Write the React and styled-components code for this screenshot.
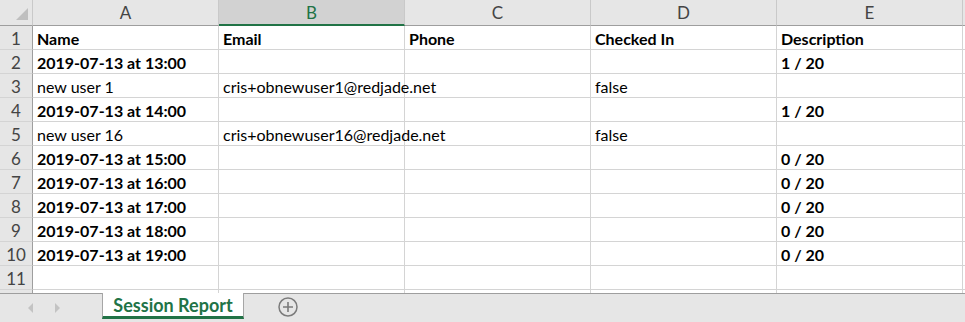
import React from 'react'
import styled, { createGlobalStyle } from 'styled-components'

const GlobalStyle = createGlobalStyle`
    html, body {
        margin: 0;
        padding: 0;
        background: #ffffff;
        overflow: hidden;
    }
`

const Window = styled.div`
    width: 965px;
    height: 322px;
    display: flex;
    flex-direction: column;
    font-family: Lato, 'Liberation Sans', sans-serif;
    overflow: hidden;
`

const SheetArea = styled.div`
    height: 293px;
    overflow: hidden;
    background: #ffffff;
`

const Grid = styled.div`
    display: grid;
    grid-template-columns: 33px repeat(5, 186px) 1fr;
    grid-auto-rows: 24px;
    grid-template-rows: 26px;
`

const Corner = styled.div`
    position: relative;
    background: #e6e6e6;
    border-right: 1px solid #c9c9c9;
    border-bottom: 1px solid #9e9e9e;

    &::after {
        content: '';
        position: absolute;
        right: 4px;
        bottom: 5px;
        width: 0;
        height: 0;
        border-left: 12px solid transparent;
        border-bottom: 12px solid #bfbfbf;
    }
`

const ColHead = styled.div`
    display: flex;
    align-items: center;
    justify-content: center;
    background: ${p => (p.$active ? '#d2d2d2' : '#e6e6e6')};
    border-right: 1px solid #c9c9c9;
    border-bottom: ${p => (p.$active ? '2px solid #217346' : '1px solid #9e9e9e')};
    color: ${p => (p.$active ? '#217346' : '#444444')};
    font-size: 17px;
    padding-bottom: ${p => (p.$active ? '0' : '1px')};
`

const RowHead = styled.div`
    display: flex;
    align-items: center;
    justify-content: center;
    background: #e6e6e6;
    border-right: 1px solid #9e9e9e;
    border-bottom: 1px solid #d4d4d4;
    color: #444444;
    font-size: 17px;
    padding-top: 1px;
`

const Cell = styled.div`
    display: flex;
    align-items: center;
    padding: 1px 4px 0;
    border-right: 1px solid #d4d4d4;
    border-bottom: 1px solid #d4d4d4;
    font-size: 16px;
    font-weight: ${p => (p.$bold ? 700 : 400)};
    color: #000000;
    white-space: nowrap;
    overflow: visible;
`

const TabBar = styled.div`
    flex: 1;
    display: flex;
    align-items: stretch;
    background: #e6e6e6;
    border-top: 1px solid #9e9e9e;
`

const NavArea = styled.div`
    width: 102px;
    display: flex;
    align-items: center;
    padding-left: 28px;
    gap: 22px;
    box-sizing: border-box;
`

const Arrow = styled.span`
    width: 0;
    height: 0;
    border-top: 5px solid transparent;
    border-bottom: 5px solid transparent;
    ${p => (p.$dir === 'left' ? 'border-right: 5px solid #c3c3c3;' : 'border-left: 5px solid #c3c3c3;')}
`

const SheetTab = styled.div`
    width: 140px;
    height: 23px;
    margin-top: -1px;
    display: flex;
    align-items: center;
    justify-content: center;
    background: #ffffff;
    border-left: 1px solid #a6a6a6;
    border-right: 1px solid #a6a6a6;
    border-bottom: 3px solid #217346;
    color: #217346;
    font-size: 18px;
    font-weight: 700;
`

const AddSheet = styled.div`
    margin-left: 33px;
    display: flex;
    align-items: center;
    padding-bottom: 2px;
`

const columns = ['A', 'B', 'C', 'D', 'E']

const rows = [
    { cells: ['Name', 'Email', 'Phone', 'Checked In', 'Description'], bold: true },
    { cells: ['2019-07-13 at 13:00', '', '', '', '1 / 20'], bold: true },
    { cells: ['new user 1', 'cris+obnewuser1@redjade.net', '', 'false', ''] },
    { cells: ['2019-07-13 at 14:00', '', '', '', '1 / 20'], bold: true },
    { cells: ['new user 16', 'cris+obnewuser16@redjade.net', '', 'false', ''] },
    { cells: ['2019-07-13 at 15:00', '', '', '', '0 / 20'], bold: true },
    { cells: ['2019-07-13 at 16:00', '', '', '', '0 / 20'], bold: true },
    { cells: ['2019-07-13 at 17:00', '', '', '', '0 / 20'], bold: true },
    { cells: ['2019-07-13 at 18:00', '', '', '', '0 / 20'], bold: true },
    { cells: ['2019-07-13 at 19:00', '', '', '', '0 / 20'], bold: true },
    { cells: ['', '', '', '', ''] },
    // only a sliver of row 12 shows above the tab bar
    { cells: ['', '', '', '', ''], hideNumber: true },
]

function PlusCircle() {
    return (
        <svg width="22" height="22" viewBox="0 0 22 22">
            <circle cx="11" cy="11" r="9" fill="none" stroke="#7b7b7b" strokeWidth="1.5" />
            <path d="M11 6v10M6 11h10" stroke="#7b7b7b" strokeWidth="1.6" />
        </svg>
    )
}

export default function App() {
    return (
        <Window>
            <GlobalStyle />
            <SheetArea>
                <Grid>
                    <Corner />
                    {columns.map(c => (
                        <ColHead key={c} $active={c === 'B'}>
                            {c}
                        </ColHead>
                    ))}
                    <ColHead />
                    {rows.map((row, i) => (
                        <React.Fragment key={i}>
                            <RowHead>{row.hideNumber ? '' : i + 1}</RowHead>
                            {row.cells.map((text, j) => (
                                <Cell key={j} $bold={row.bold}>
                                    {text}
                                </Cell>
                            ))}
                            <Cell />
                        </React.Fragment>
                    ))}
                </Grid>
            </SheetArea>
            <TabBar>
                <NavArea>
                    <Arrow $dir="left" />
                    <Arrow $dir="right" />
                </NavArea>
                <SheetTab>Session Report</SheetTab>
                <AddSheet>
                    <PlusCircle />
                </AddSheet>
            </TabBar>
        </Window>
    )
}
